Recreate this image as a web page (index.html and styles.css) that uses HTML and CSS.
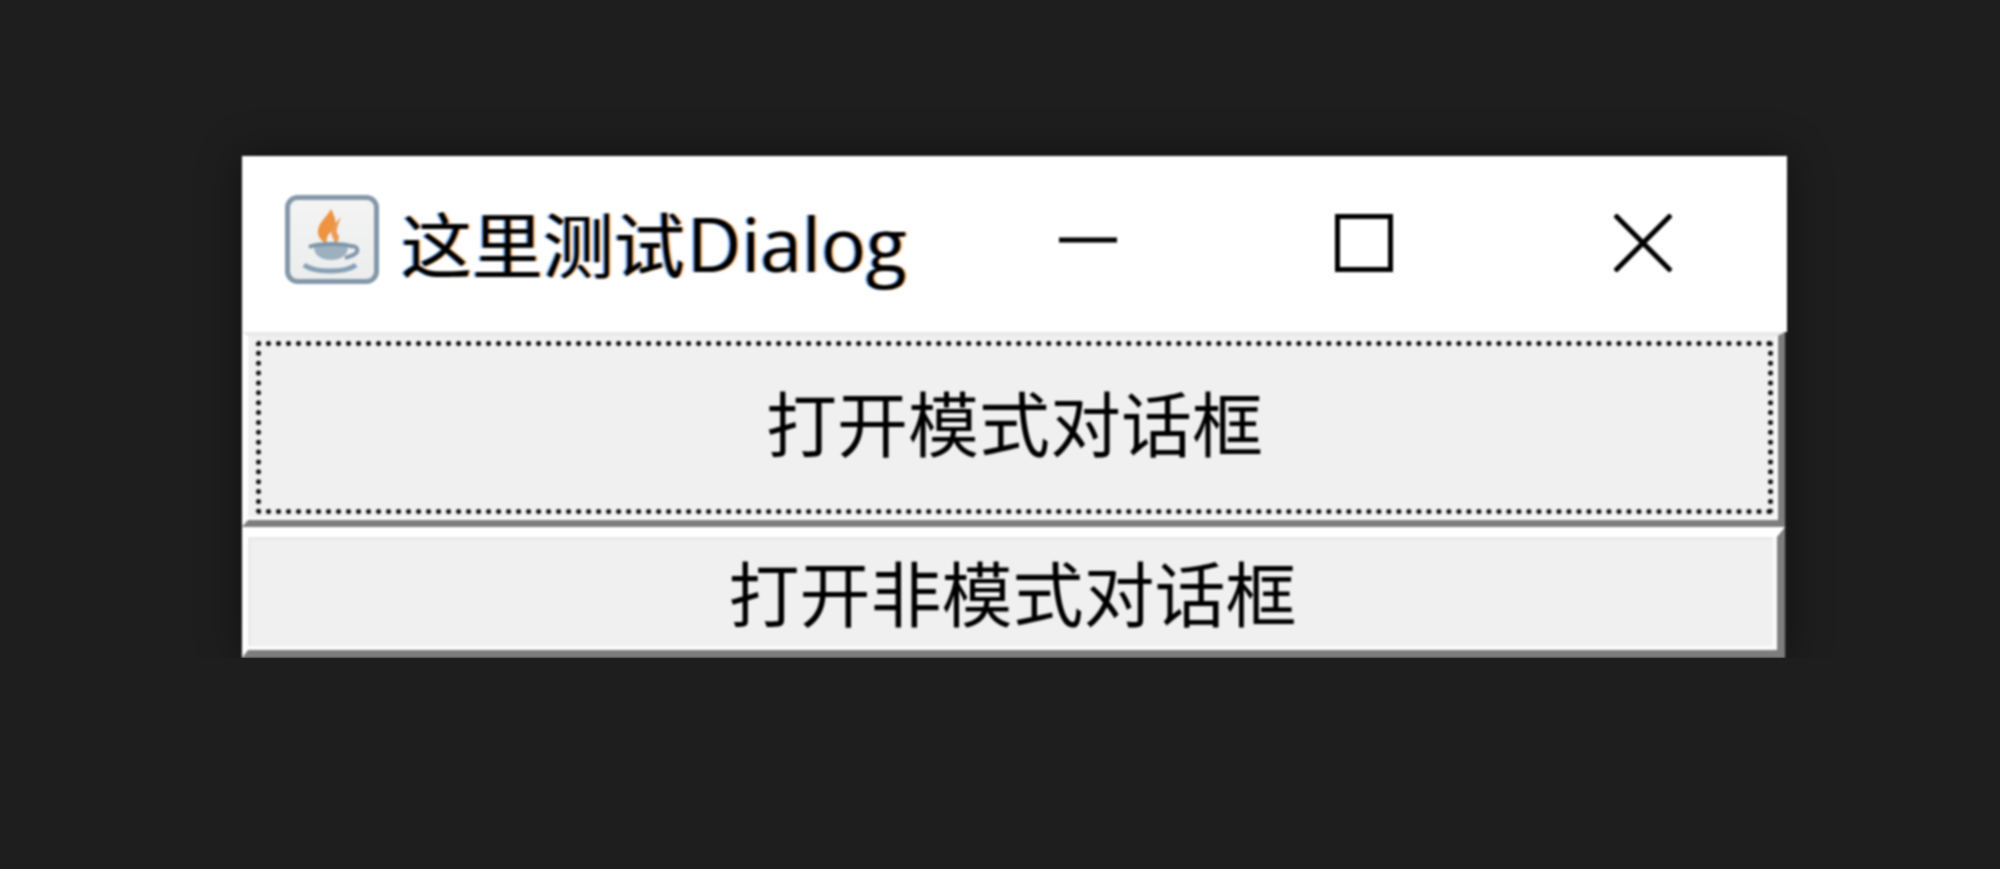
FILE: index.html
```html
<!DOCTYPE html>
<html lang="zh-CN">

<head>
    <meta charset="UTF-8">
    <meta name="viewport" content="width=device-width, initial-scale=1.0">
    <title>这里测试Dialog</title>
    <link rel="stylesheet" href="styles.css">
</head>

<body>

    <div class="window">

        <!-- Title bar -->
        <div class="titlebar">
            <svg class="app-icon" viewBox="0 0 94 89">
                <defs>
                    <linearGradient id="icon-bg" x1="0" y1="0" x2="0" y2="1">
                        <stop offset="0" stop-color="#f4f4f4" />
                        <stop offset="1" stop-color="#eceded" />
                    </linearGradient>
                </defs>
                <rect x="2.5" y="2.5" width="89" height="84" rx="10" fill="url(#icon-bg)" stroke="#8397a8" stroke-width="5" />
                <path d="M46 14 C42 22 34 27 33 35 C32 41 36 46 42 49 C41 44 42 40 47 36 C52 32 52 25 46 14 Z" fill="#ee9342" />
                <path d="M56 22 C50 28 44 35 47 41 C49 45 50 47 48 50 C55 46 55 42 52 38 C51 35 53 30 56 22 Z" fill="#ee9a52" />
                <path d="M29 52 C36 50 56 50 63 52 C63 60 56 65 46 65 C36 65 29 60 29 52 Z" fill="#9db0c0" />
                <path d="M24 52 C34 48 60 48 68 52" stroke="#7d95a9" stroke-width="4" fill="none" />
                <path d="M64 51 C73 50 74 56 70 59 C67 61 63 62 60 63" stroke="#7f98ac" stroke-width="4" fill="none" />
                <path d="M19 70 C30 78 60 78 71 70" stroke="#86a0b5" stroke-width="5" fill="none" />
            </svg>
            <span class="title-text">这里测试<span class="title-latin">Dialog</span></span>
            <div class="controls">
                <div class="control">
                    <svg viewBox="0 0 58 58" class="control-icon">
                        <path d="M0 26 H58" />
                    </svg>
                </div>
                <div class="control">
                    <svg viewBox="0 0 58 58" class="control-icon">
                        <rect x="2.5" y="2.5" width="53" height="53" />
                    </svg>
                </div>
                <div class="control control-close">
                    <svg viewBox="0 0 58 58" class="control-icon">
                        <path d="M1 1 L57 57 M57 1 L1 57" />
                    </svg>
                </div>
            </div>
        </div>

        <!-- Buttons -->
        <button class="btn btn-modal"><span class="btn-focus">打开模式对话框</span></button>
        <button class="btn btn-modeless">打开非模式对话框</button>
    </div>

</body>

</html>
```

FILE: styles.css
```css
body {
    margin: 0;
    padding: 156px 0 0 242px;
    background: #1e1e1e;
    font-family: "Noto Sans CJK SC", sans-serif;
    color: #000;
}

.window {
    width: 1545px;
    height: 502px;
    display: flex;
    flex-direction: column;
    filter: blur(1.2px);
    box-shadow: 0 0 40px rgba(0, 0, 0, 0.45);
}

/* title bar */
.titlebar {
    height: 176px;
    display: flex;
    align-items: center;
    background: #fff;
    padding-left: 43px;
}

.app-icon {
    width: 94px;
    height: 89px;
    margin-right: 24px;
    margin-bottom: 9px;
}

.title-text {
    font-family: "Noto Sans CJK SC", sans-serif;
    font-size: 71px;
    line-height: 90px;
    margin-bottom: 4px;
    margin-left: -2px;
    text-shadow: 2px 0 rgba(255, 130, 0, 0.5), -2px 0 rgba(0, 110, 255, 0.5);
}

.title-latin {
    font-family: "Open Sans", sans-serif;
    font-size: 75px;
    margin-left: 2px;
}

.controls {
    margin-left: auto;
    display: flex;
    padding-right: 4px;
}

.control {
    width: 276px;
    display: flex;
    justify-content: center;
}

.control-close {
    width: 281px;
}

.control-icon {
    width: 58px;
    height: 58px;
    margin-bottom: 3px;
    fill: none;
    stroke: #000;
    stroke-width: 5;
}

/* buttons */
.btn {
    display: flex;
    justify-content: center;
    align-items: center;
    margin: 0 2px 0 0;
    padding: 0;
    background: #f0f0f0;
    color: #000;
    font-family: "Noto Sans CJK SC", sans-serif;
    font-size: 71px;
    line-height: 90px;
    border-style: solid;
    border-color: #fff #7d7d7d #7d7d7d #fff;
}

.btn-modal {
    height: 195px;
    border-width: 4px 7px 7px 6px;
    border-top-color: #e8e8e8;
    padding: 5px 5px 6px 8px;
    box-shadow: inset -3px -3px 0 #fafafa;
}

.btn-focus {
    flex: 1;
    align-self: stretch;
    display: flex;
    justify-content: center;
    align-items: center;
    padding-bottom: 15px;
    border: 5px dotted #111;
    border-radius: 4px;
}

.btn-modeless {
    height: 131px;
    border-width: 10px 8px 8px 6px;
    padding-bottom: 7px;
    box-shadow: inset -4px -4px 0 #fafafa, inset 3px 3px 0 #e9e9e9;
}
```
